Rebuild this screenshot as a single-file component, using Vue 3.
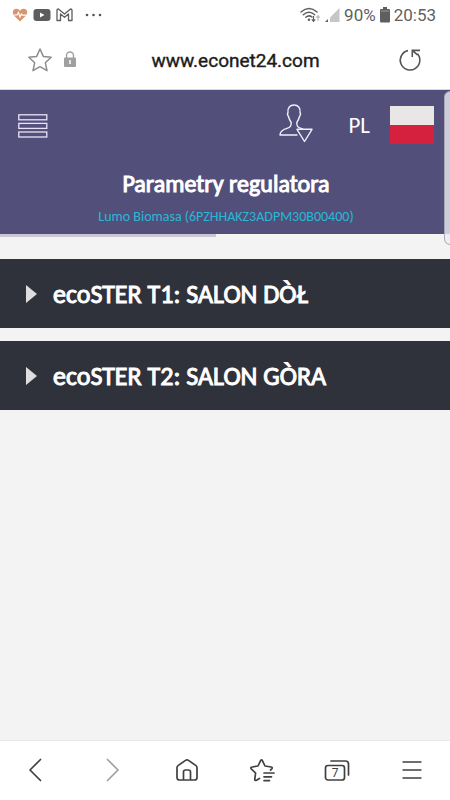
<script setup>
import { ref } from 'vue'

const sections = ref([
  { id: 't1', title: 'ecoSTER T1: SALON DÒŁ', open: false },
  { id: 't2', title: 'ecoSTER T2: SALON GÒRA', open: false }
])
const loaded = ref(48)
</script>

<template>
  <div class="screen">
    <div class="status">
      <div class="notices">
        <svg width="16" height="16" viewBox="0 0 16 16">
          <path d="M8 14.5 2 8.4C-.6 5.2 1.300 1.700 4.300 1.700 6 1.700 7.300 2.600 8 3.900 8.700 2.600 10 1.700 11.700 1.700c3 0 4.900 3.500 2.300 6.700Z" fill="#d9946f" />
          <path d="M2 8h3l1.500-2.500L8 10l1.500-3 1 1.200H14" fill="none" stroke="#fff" stroke-width="1.200" />
        </svg>
        <svg width="18" height="14" viewBox="0 0 18 14">
          <rect x=".5" y="1" width="17" height="12" rx="3" fill="#5d5d5d" />
          <path d="M7 4.500v5l4.500-2.500Z" fill="#fff" />
        </svg>
        <svg width="17" height="14" viewBox="0 0 17 14">
          <path d="M1 12.500V2.200Q1 1 2.400 1L8.500 6 14.600 1Q16 1 16 2.200V12.500H12.500V6L8.500 9.300 4.500 6V12.500Z" fill="none" stroke="#5d5d5d" stroke-width="1.300" stroke-linejoin="round" />
        </svg>
        <svg class="more" width="17" height="4" viewBox="0 0 17 4">
          <circle cx="2" cy="2" r="1.300" fill="#555" /><circle cx="8.500" cy="2" r="1.300" fill="#555" /><circle cx="15" cy="2" r="1.300" fill="#555" />
        </svg>
      </div>
      <div class="system">
        <svg width="21" height="16" viewBox="0 0 21 16">
          <g fill="none" stroke="#5f5f5f" stroke-width="1.500" stroke-linecap="round">
            <path d="M1 5Q9 -2 17 5" /><path d="M3.300 7.800Q9 2.800 14.700 7.800" /><path d="M5.800 10.300Q9 7.600 12 10" />
          </g>
          <circle cx="9" cy="12.800" r="1.300" fill="#5f5f5f" />
          <path d="M13.500 9v5M11.800 12.300l1.700 2 1.700-2" fill="none" stroke="#5f5f5f" stroke-width="1.200" />
          <path d="M18 14V9M16.300 10.700l1.700-2 1.700 2" fill="none" stroke="#bbb" stroke-width="1.200" />
        </svg>
        <svg width="15" height="16" viewBox="0 0 15 16">
          <path d="M14.500 1v14H5V10.500Z" fill="#c6c6c6" /><path d="M3 12v3H0Z" fill="#5f5f5f" />
        </svg>
        <span>90%</span>
        <svg class="battery" width="10" height="16" viewBox="0 0 10 16">
          <path d="M3 0h4v2h2q1 0 1 1v11.500q0 1-1 1H1q-1 0-1-1V3q0-1 1-1h2Z" fill="#5f5f5f" /><path d="M1 4h8" stroke="#999" />
        </svg>
        <span>20:53</span>
      </div>
    </div>

    <div class="address">
      <div class="site">
        <button type="button" aria-label="Bookmark">
          <svg width="26" height="26" viewBox="0 0 26 26">
            <path d="M13 2 16.300 9.400 24.200 10.200 18.300 15.700 20 23.700 13 19.700 6 23.700 7.700 15.700 1.800 10.200 9.700 9.400Z" fill="none" stroke="#8c8c8c" stroke-width="1.500" stroke-linejoin="round" />
          </svg>
        </button>
        <svg width="12" height="17" viewBox="0 0 12 17">
          <path d="M2.500 8V4.500a3.500 3.500 0 0 1 7 0V8" fill="none" stroke="#a0a0a0" stroke-width="1.400" />
          <rect x="0" y="6.500" width="12" height="9.500" rx="1" fill="#a0a0a0" /><path d="M6 9v4" stroke="#fff" stroke-width="1.500" />
        </svg>
      </div>
      <span class="url">www.econet24.com</span>
      <button class="reload" type="button" aria-label="Reload">
        <svg width="24" height="24" viewBox="0 0 24 24">
          <path d="M10 2.600A9.800 9.800 0 1 0 19.500 5.800M14.300 9V2.400H22M14.300 2.400 19.500 6.800" fill="none" stroke="#555" stroke-width="1.600" />
        </svg>
      </button>
    </div>

    <header class="top">
      <div class="tools">
        <button type="button" aria-label="Menu">
          <svg width="30" height="24" viewBox="0 0 30 24">
            <g fill="none" stroke="#e8e3f5" stroke-width="1.300">
              <rect x=".8" y=".8" width="28" height="5" /><rect x=".8" y="9.400" width="28" height="5" /><rect x=".8" y="18" width="28" height="5" />
            </g>
          </svg>
        </button>
        <div class="account">
          <button type="button" aria-label="Account">
            <svg width="34" height="42" viewBox="0 0 34 42">
              <g fill="none" stroke="#f0eef8" stroke-width="1.400" stroke-linejoin="round">
                <path d="M18.500 31H1C1 27 4 25.600 8 24.400 11.500 23.300 12.200 22 12.200 18.500 10.700 16.500 10 14.500 9.500 12.500 8.300 11 8.300 9.500 9 8.500 8.300 4 11 1 15 1S21.700 4 21 8.500C21.700 9.500 21.700 11 20.500 12.500 20 14.500 19.300 16.500 17.800 18.500 17.800 22 18.500 23.300 22 24.400L24 25.200" />
                <path d="M18 25.300H33L25.500 37.500Z" />
              </g>
            </svg>
          </button>
          <button class="language" type="button">
            <span>PL</span>
            <svg width="44" height="38" viewBox="0 0 44 38">
              <path d="M0 0h44v19H0Z" fill="#e8e7e5" /><path d="M0 19h44v19H0Z" fill="#d5213d" />
            </svg>
          </button>
        </div>
      </div>
      <h1>Parametry regulatora</h1>
      <p>Lumo Biomasa (6PZHHAKZ3ADPM30B00400)</p>
      <div class="scrollbar"></div>
    </header>
    <div class="progress"><div class="bar" :style="{ width: loaded + '%' }"></div></div>

    <main>
      <button v-for="s in sections" :key="s.id" class="section" type="button" :aria-expanded="s.open" @click="s.open = !s.open">
        <svg width="11" height="18" viewBox="0 0 11 18"><path d="M0 0 11 9 0 18Z" fill="#dededf" /></svg>
        <span>{{ s.title }}</span>
      </button>
    </main>

    <nav>
      <button type="button" aria-label="Back">
        <svg viewBox="0 0 28 28"><path d="M17.500 3.500 7 14 17.500 24.500" /></svg>
      </button>
      <button type="button" aria-label="Forward" class="off">
        <svg viewBox="0 0 28 28"><path d="M9.500 3.500 20 14 9.500 24.500" /></svg>
      </button>
      <button type="button" aria-label="Home">
        <svg viewBox="0 0 28 28">
          <path d="M4 11.500Q4 10.300 5 9.600L12.500 4.400Q14 3.400 15.500 4.400L23 9.600Q24 10.300 24 11.500V21.500Q24 24 21.500 24H6.500Q4 24 4 21.500ZM10.500 24V16Q10.500 14 12.500 14H15.500Q17.500 14 17.500 16V24" />
        </svg>
      </button>
      <button type="button" aria-label="Bookmarks">
        <svg viewBox="0 0 28 28">
          <path d="M11.500 22.500 8.500 24.200Q6.500 25 6.800 23L7.600 17 3.200 12.800Q2.200 11.300 4 11L10 10 12.600 4.700Q13.500 3.200 14.400 4.700L17 10 23.200 11Q25 11.400 23.800 12.800L22.500 14.200M16 17H26M16 20.800H23.500M16 24.600H21.500" />
        </svg>
      </button>
      <button type="button" aria-label="Tabs">
        <svg viewBox="0 0 28 28">
          <rect x="2.500" y="9.500" width="19" height="14.500" rx="2.500" /><path d="M8 5H22.500Q25.500 5 25.500 8V19" />
          <text x="12" y="21" text-anchor="middle">7</text>
        </svg>
      </button>
      <button type="button" aria-label="More">
        <svg viewBox="0 0 28 28"><path class="flat" d="M4.500 6H23.500M4.500 14H23.500M4.500 22H23.500" /></svg>
      </button>
    </nav>
  </div>
</template>

<style>
body {
  background: #f3f3f3;
}
</style>

<style scoped>
.screen {
  min-height: 100vh;
  display: flex;
  flex-direction: column;
  background: #f3f3f3;
  font-family: Carlito, Lato, "Liberation Sans", sans-serif;
}
button {
  display: flex;
  align-items: center;
  padding: 0;
  border: 0;
  background: none;
  color: inherit;
  font: inherit;
  cursor: pointer;
}
svg {
  display: block;
  flex: none;
}
.status {
  height: 30px;
  padding: 0 14px 0 12px;
  display: flex;
  align-items: center;
  justify-content: space-between;
  background: #fff;
  color: #5f5f5f;
  font: 17px/20px Roboto, sans-serif;
}
.notices,
.system {
  display: flex;
  align-items: center;
  gap: 5px;
}
.more {
  margin-left: 7px;
}
.system {
  gap: 4px;
}
.address {
  height: 59px;
  padding: 0 28px 0 27px;
  display: grid;
  grid-template-columns: 1fr auto 1fr;
  align-items: center;
  background: #fff;
  border-bottom: 1px solid #d9d7e6;
}
.site {
  display: flex;
  align-items: center;
  gap: 11px;
}
.url {
  padding: 2px 0 0 22px;
  font: 19px/24px Roboto, sans-serif;
  color: #1c1c1c;
  -webkit-text-stroke: 0.4px;
}
.reload {
  justify-self: end;
}
.top {
  position: relative;
  padding: 13px 16px 8px 18px;
  background: #534f7b;
  color: #fff;
  text-align: center;
}
.tools,
.account,
.language {
  display: flex;
  align-items: center;
}
.tools {
  height: 45px;
  justify-content: space-between;
}
.account {
  padding-bottom: 2px;
  gap: 35px;
}
.language {
  gap: 20px;
  font-size: 23px;
  line-height: 24px;
}
h1 {
  margin: 22px 0 0;
  font-size: 24px;
  line-height: 28px;
  font-weight: 400;
  -webkit-text-stroke: 1px;
}
p {
  margin: 9px 0 0;
  font-size: 14px;
  line-height: 19px;
  color: #28b8d5;
}
.scrollbar {
  position: absolute;
  top: 1px;
  right: -6px;
  width: 12px;
  bottom: -11px;
  box-sizing: border-box;
  border: 1px solid #a9a8b5;
  border-radius: 6px;
  background: rgba(235, 235, 243, 0.8);
  clip-path: inset(0 6px 0 0);
}
.progress {
  height: 3px;
}
.bar {
  height: 100%;
  background: #c9c6d6;
}
main {
  flex: 1;
  padding-top: 22px;
  display: flex;
  flex-direction: column;
  gap: 13px;
}
.section {
  width: 100%;
  height: 69px;
  padding: 0 26px;
  gap: 16px;
  background: #2f313b;
  color: #fff;
  font-size: 26px;
  line-height: 30px;
  -webkit-text-stroke: 1px;
  text-align: left;
}
nav {
  height: 58px;
  padding: 0 1px 1px 0;
  display: grid;
  grid-template-columns: repeat(6, 1fr);
  background: #fff;
  border-top: 1px solid #e9e9e9;
}
nav button {
  justify-content: center;
  color: #404040;
}
nav .off {
  color: #a0a0a0;
}
nav svg {
  width: 28px;
  height: 28px;
  fill: none;
  stroke: currentColor;
  stroke-width: 1.7;
  stroke-linecap: round;
  stroke-linejoin: round;
}
nav .flat {
  stroke-linecap: butt;
}
nav text {
  fill: currentColor;
  stroke: none;
  font: 12px Roboto, sans-serif;
}
</style>
